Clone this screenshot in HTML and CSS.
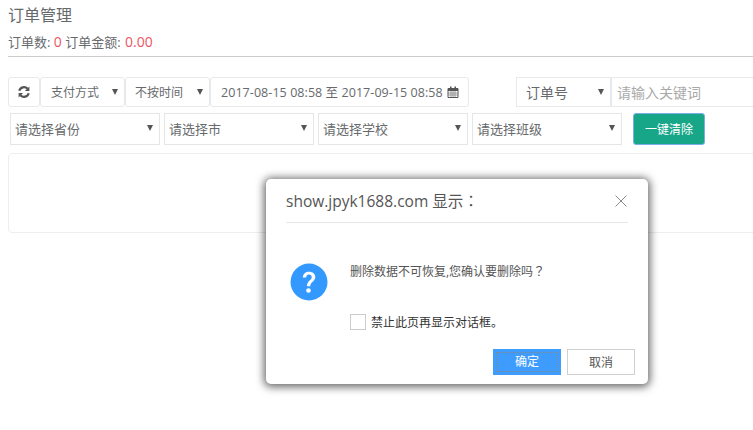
FILE: index.html
```html
<!DOCTYPE html>
<html lang="zh">
<head>
<meta charset="utf-8">
<title>订单管理</title>
<link rel="stylesheet" href="styles.css">
</head>
<body>
<div class="page">
  <h1 class="title">订单管理</h1>
  <p class="stats">订单数: <span class="red">0</span> 订单金额: <span class="red amount">0.00</span></p>
  <hr class="rule">
  <div class="toolbar">
    <div class="tool refresh">
      <svg width="12" height="12" viewBox="0 0 13 13"><path d="M1.400 5.200A5.200 5.200 0 0 1 10.300 3" fill="none" stroke="#555" stroke-width="2.400"/><path d="M12.300 .5v4.800H7.500z" fill="#555"/><path d="M11.600 7.800A5.200 5.200 0 0 1 2.700 10" fill="none" stroke="#555" stroke-width="2.400"/><path d="M.7 12.500V7.700h4.800z" fill="#555"/></svg>
    </div>
    <div class="tool sel pay">支付方式<i class="arrow"></i></div>
    <div class="tool sel time">不按时间<i class="arrow"></i></div>
    <div class="tool date">2017-08-15 08:58 至 2017-09-15 08:58
      <svg class="cal" width="12" height="12" viewBox="0 0 12 12"><path d="M1 2.500h10v9H1z" fill="none" stroke="#555"/><path d="M1 2h10v3H1zM3 0.500h1.500V3H3zM7.500 .5H9V3H7.500z" fill="#555"/><path d="M4 5v6M6 5v6M8 5v6M1 7h10M1 9h10" stroke="#777" stroke-width=".7"/></svg>
    </div>
    <div class="tool sel order">订单号<i class="arrow"></i></div>
    <div class="tool keyword">请输入关键词</div>
  </div>
  <div class="filters">
    <div class="filter">请选择省份<i class="arrow"></i></div>
    <div class="filter">请选择市<i class="arrow"></i></div>
    <div class="filter">请选择学校<i class="arrow"></i></div>
    <div class="filter">请选择班级<i class="arrow"></i></div>
    <button class="clear">一键清除</button>
  </div>
  <div class="panel"></div>
</div>
<div class="dialog">
  <div class="dialog-head">
    <span>show.jpyk1688.com 显示<span class="wide" lang="zh-TW">：</span></span>
    <svg width="12" height="12" viewBox="0 0 12 12"><path d="M.5.5l11 11M11.500.5l-11 11" stroke="#8a8a8a" fill="none"/></svg>
  </div>
  <div class="dialog-body">
    <svg class="ask" width="38" height="38" viewBox="0 0 38 38"><circle cx="19" cy="19" r="18.500" fill="#3399ff"/><path d="M12.800 14.500c.3-4 2.900-5.800 6.300-5.800 3.600 0 6.200 2.200 6.200 5.400 0 4.900-5 4.600-5 9.100h-3.300c0-5.700 4.700-5.700 4.700-9 0-1.500-1.100-2.600-2.700-2.600-1.700 0-2.700 1.100-2.900 3z" fill="#fff"/><circle cx="18.500" cy="27.500" r="2.300" fill="#fff"/></svg>
    <div class="copy">
      <p class="message">删除数据不可恢复,您确认要删除吗<span class="wide" lang="zh-TW">？</span></p>
      <label class="check"><i class="box"></i>禁止此页再显示对话框。</label>
    </div>
  </div>
  <div class="actions">
    <button class="btn ok"><span>确定</span></button>
    <button class="btn cancel">取消</button>
  </div>
</div>
</body>
</html>
```
FILE: styles.css
```css
html, body { margin: 0; padding: 0; height: 430px; overflow: hidden; background: #fff; }
body { font-family: "Open Sans", "Noto Sans CJK SC", sans-serif; color: #676a6c; font-size: 12px; position: relative; }
.page { padding: 0 0 0 8px; width: 745px; overflow: hidden; }
.title { margin: 0; padding-top: 4px; height: 22px; line-height: 22px; font-size: 16px; font-weight: 400; }
.stats { margin: 7px 0 0; height: 18px; line-height: 18px; font-size: 13px; }
.red { color: #ed5565; font-size: 14px; }
.amount { margin-left: 1px; }
.wide { font-family: "Noto Sans CJK TC", sans-serif; }
.rule { margin: 5px 0 0; border: 0; border-top: 1px solid #ccc; }
.toolbar { display: flex; height: 30px; margin-top: 20px; }
.tool { box-sizing: border-box; height: 30px; border: 1px solid #e7eaec; border-radius: 3px; line-height: 29px; font-size: 12px; position: relative; white-space: nowrap; flex: none; }
.refresh { width: 32px; display: flex; align-items: center; justify-content: center; }
.sel { padding-left: 10px; }
.time { padding-left: 9px; }
.pay, .time { width: 85px; }
.date { width: 259px; padding-left: 10px; font-size: 12.500px; letter-spacing: .06px; }
.cal { vertical-align: -1px; margin-left: 1px; }
.order { width: 95px; margin-left: 47px; border-radius: 0; font-size: 14px; padding-left: 9px; }
.keyword { width: 160px; border-radius: 0; padding-left: 5px; color: #a9a9a9; font-size: 14px; }
.arrow { position: absolute; right: 6px; top: 11px; width: 0; height: 0; border-left: 3.500px solid transparent; border-right: 3.500px solid transparent; border-top: 6px solid #555; }
.filters { display: flex; height: 32px; margin-top: 6px; padding-left: 2px; gap: 4px; }
.filter { box-sizing: border-box; width: 150px; height: 32px; line-height: 31px; padding-left: 4px; border: 1px solid #e5e6e7; font-size: 13px; position: relative; flex: none; }
.filter .arrow { top: 11px; }
.clear { box-sizing: border-box; width: 72px; height: 32px; margin-left: 7px; padding: 0; background: #18a689; color: #fff; border: 1px solid #7baee8; border-radius: 3px; font: 12px "Open Sans", "Noto Sans CJK SC", sans-serif; flex: none; }
.panel { box-sizing: border-box; height: 80px; width: 760px; margin-top: 8px; border: 1px solid #eeeeee; border-radius: 4px; }
.dialog { position: absolute; left: 266px; top: 179px; box-sizing: border-box; width: 382px; height: 205px; padding: 0 20px; background: #fff; border-radius: 5px; box-shadow: 0 1px 9px 2px rgba(0,0,0,.6); }
.dialog-head { display: flex; justify-content: space-between; align-items: center; height: 44px; border-bottom: 1px solid #e6e6e6; font-size: 15.500px; color: #555; padding-right: 1px; box-sizing: border-box; }
.dialog-head svg { margin-right: 0; margin-top: 1px; }
.dialog-body { display: flex; padding: 40px 0 0 4px; }
.ask { flex: none; margin-top: 0; }
.copy { margin-left: 22px; }
.message { margin: -1px 0 0; height: 18px; line-height: 18px; font-size: 12px; color: #555; }
.check { display: flex; align-items: center; margin-top: 34px; height: 16px; font-size: 12px; color: #333; }
.box { box-sizing: border-box; width: 16px; height: 16px; border: 1px solid #ccc; margin-right: 5px; }
.actions { position: absolute; left: 227px; top: 170px; display: flex; gap: 6px; }
.btn { box-sizing: border-box; width: 68px; height: 26px; padding: 0; font: 12px "Open Sans", "Noto Sans CJK SC", sans-serif; border-radius: 0; }
.ok { background: #3f9cff; color: #fff; border: 0; padding: 3px; }
.ok span { display: block; height: 18px; line-height: 18px; border: 1px dotted #888; }
.cancel { background: #fff; color: #555; border: 1px solid #d0d0d0; }
```
